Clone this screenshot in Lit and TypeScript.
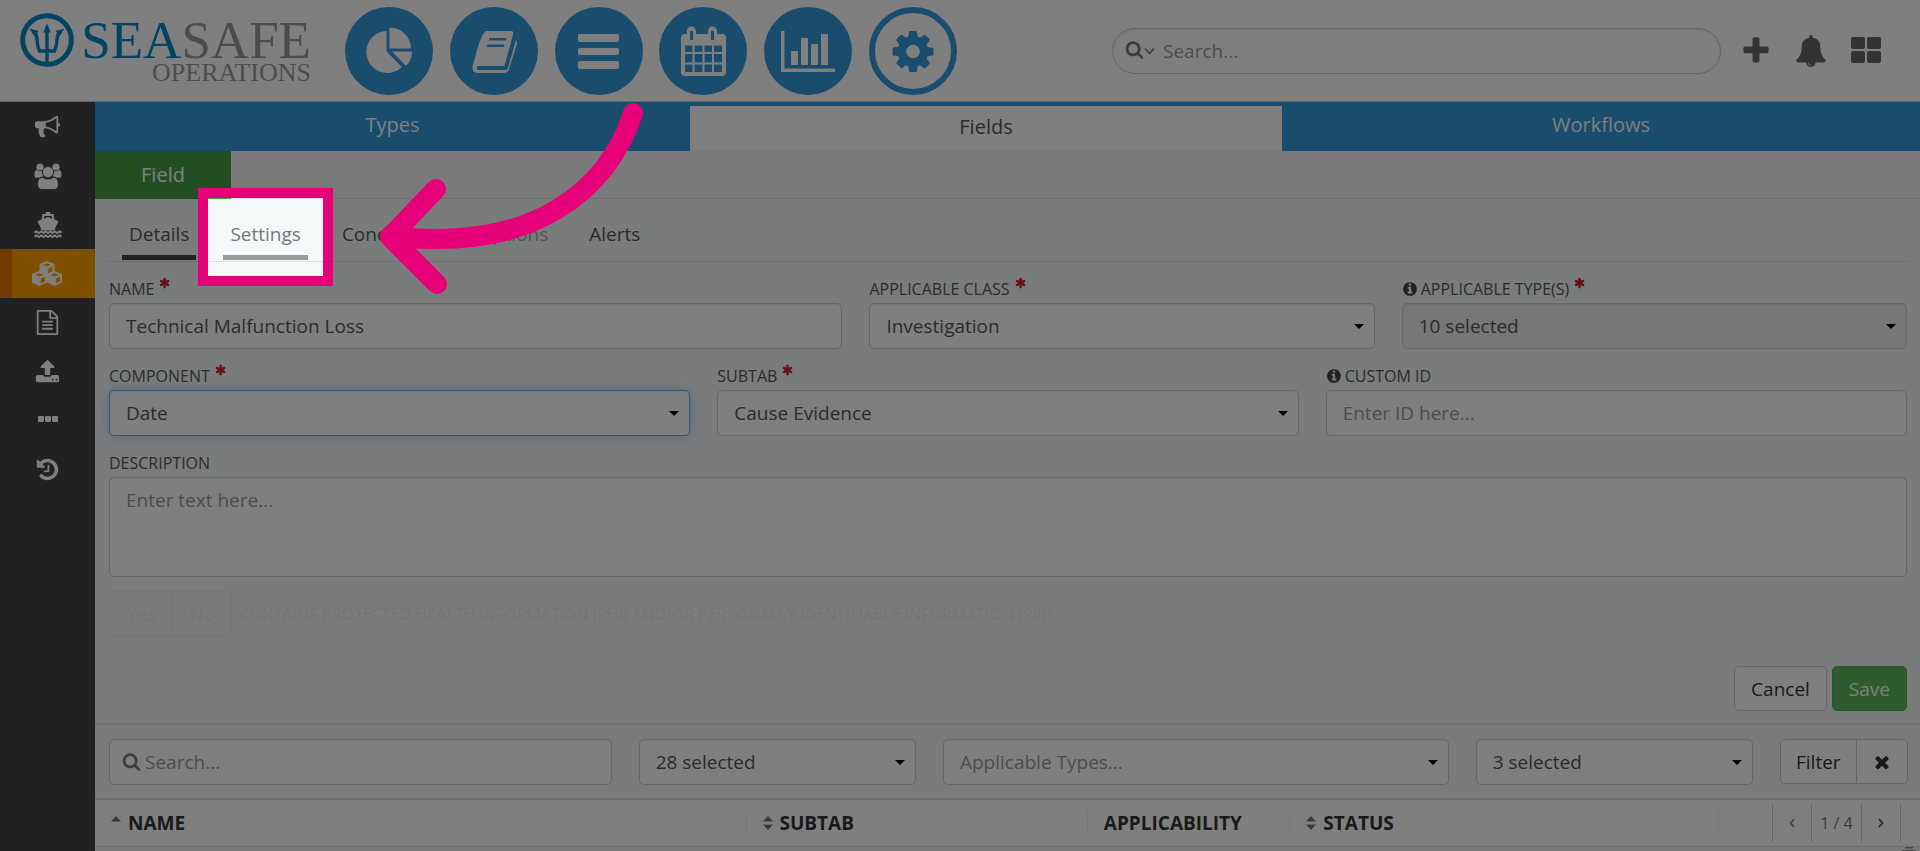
import { LitElement, html, css, svg } from "lit";
import { customElement } from "lit/decorators.js";
import { classMap } from "lit/directives/class-map.js";

const glyph = (d: string) => svg`<path d=${d}></path>`;

const SEARCH = glyph("M1216 832q0-185-131.5-316.5t-316.5-131.5-316.5 131.5-131.5 316.5 131.5 316.5 316.5 131.5 316.5-131.5 131.5-316.5zm512 832q0 52-38 90t-90 38q-54 0-90-38l-343-342q-179 124-399 124-143 0-273.5-55.5t-225-150-150-225-55.5-273.5 55.5-273.5 150-225 225-150 273.5-55.5 273.5 55.5 225 150 150 225 55.5 273.5q0 220-124 399l343 343q37 37 37 90z");
const PLUS = glyph("M1600 736v192q0 40-28 68t-68 28h-416v416q0 40-28 68t-68 28h-192q-40 0-68-28t-28-68v-416h-416q-40 0-68-28t-28-68v-192q0-40 28-68t68-28h416v-416q0-40 28-68t68-28h192q40 0 68 28t28 68v416h416q40 0 68 28t28 68z");
const BELL = glyph("M912 1696q0-16-16-16-59 0-101.5-42.5t-42.5-101.5q0-16-16-16t-16 16q0 73 51.5 124.5t124.5 51.5q16 0 16-16zm816-288q0 52-38 90t-90 38h-448q0 106-75 181t-181 75-181-75-75-181h-448q-52 0-90-38t-38-90q50-42 91-88t85-119.5 74.5-158.5 50-206 19.5-260q0-152 117-282.5t307-158.5q-8-19-8-39 0-40 28-68t68-28 68 28 28 68q0 20-8 39 190 28 307 158.5t117 282.5q0 139 19.5 260t50 206 74.5 158.5 85 119.5 91 88z");
const BULLHORN = glyph("M1664 640q53 0 90.5 37.5t37.5 90.5-37.5 90.5-90.5 37.5v384q0 52-38 90t-90 38q-417-347-812-380-58 19-91 66t-31 100.5 40 92.5q-20 33-23 65.5t6 58 33.5 55 48 50 61.5 50.5q-29 58-111.5 83t-168.5 11.5-132-55.5q-7-23-29.5-87.5t-32-94.5-23-89-15-101 3.5-98.5 22-110.5h-122q-66 0-113-47t-47-113v-192q0-66 47-113t113-47h480q435 0 896-384 52 0 90 38t38 90v384zm-128 604v-954q-394 302-768 343v270q377 42 768 341z");
const FILE = glyph("M1596 380q28 28 48 76t20 88v1152q0 40-28 68t-68 28h-1344q-40 0-68-28t-28-68v-1600q0-40 28-68t68-28h896q40 0 88 20t76 48zm-444-244v376h376q-10-29-22-41l-313-313q-12-12-41-22zm384 1528v-1024h-416q-40 0-68-28t-28-68v-416h-768v1536h1280zm-1024-864q0-14 9-23t23-9h704q14 0 23 9t9 23v64q0 14-9 23t-23 9h-704q-14 0-23-9t-9-23v-64zm736 224q14 0 23 9t9 23v64q0 14-9 23t-23 9h-704q-14 0-23-9t-9-23v-64q0-14 9-23t23-9h704zm0 256q14 0 23 9t9 23v64q0 14-9 23t-23 9h-704q-14 0-23-9t-9-23v-64q0-14 9-23t23-9h704z");
const UPLOAD = glyph("M1344 1472q0-26-19-45t-45-19-45 19-19 45 19 45 45 19 45-19 19-45zm256 0q0-26-19-45t-45-19-45 19-19 45 19 45 45 19 45-19 19-45zm128-224v320q0 40-28 68t-68 28h-1472q-40 0-68-28t-28-68v-320q0-40 28-68t68-28h427q21 56 70.5 92t110.5 36h256q61 0 110.5-36t70.5-92h427q40 0 68 28t28 68zm-325-648q-17 40-59 40h-256v448q0 26-19 45t-45 19h-256q-26 0-45-19t-19-45v-448h-256q-42 0-59-40-17-39 14-69l448-448q18-19 45-19t45 19l448 448q31 30 14 69z");
const HISTORY = glyph("M1664 896q0 156-61 298t-164 245-245 164-298 61q-172 0-327-72.5t-264-204.5q-7-10-6.5-22.5t8.5-20.5l137-138q10-9 25-9 16 2 23 12 73 95 179 147t225 52q104 0 198.5-40.5t163.5-109.5 109.5-163.5 40.5-198.5-40.5-198.5-109.5-163.5-163.5-109.5-198.5-40.5q-98 0-188 35.5t-160 101.5l137 138q31 30 14 69-17 40-59 40h-448q-26 0-45-19t-19-45v-448q0-42 40-59 39-17 69 14l130 129q107-101 244.5-156.5t284.5-55.5q156 0 298 61t245 164 164 245 61 298zm-640-288v448q0 14-9 23t-23 9h-320q-14 0-23-9t-9-23v-64q0-14 9-23t23-9h224v-352q0-14 9-23t23-9h64q14 0 23 9t9 23z");
const COG = glyph("M1152 896q0-106-75-181t-181-75-181 75-75 181 75 181 181 75 181-75 75-181zm512-109v222q0 12-8 23t-20 13l-185 28q-19 54-39 91 35 50 107 138 10 12 10 25t-9 23q-27 37-99 108t-94 71q-12 0-26-9l-138-108q-44 23-91 38-16 136-29 186-7 28-36 28h-222q-14 0-24.5-8.5t-11.5-21.5l-28-184q-49-16-90-37l-141 107q-10 9-25 9-14 0-25-11-126-114-165-168-7-10-7-23 0-12 8-23 15-21 51-66.5t54-70.5q-27-50-41-99l-183-27q-13-2-21-12.5t-8-23.5v-222q0-12 8-23t19-13l186-28q14-46 39-92-40-57-107-138-10-12-10-24 0-10 9-23 26-36 98.5-107.5t94.5-71.5q13 0 26 10l138 107q44-23 91-38 16-136 29-186 7-28 36-28h222q14 0 24.5 8.5t11.5 21.5l28 184q49 16 90 37l142-107q9-9 24-9 13 0 25 10 129 119 165 170 7 8 7 22 0 12-8 23-15 21-51 66.5t-54 70.5q26 50 41 98l183 28q13 2 21 12.5t8 23.5z");
const INFO = glyph("M1152 1376v-160q0-14-9-23t-23-9h-96v-512q0-14-9-23t-23-9h-320q-14 0-23 9t-9 23v160q0 14 9 23t23 9h96v320h-96q-14 0-23 9t-9 23v160q0 14 9 23t23 9h448q14 0 23-9t9-23zm-128-896v-160q0-14-9-23t-23-9h-192q-14 0-23 9t-9 23v160q0 14 9 23t23 9h192q14 0 23-9t9-23zm640 416q0 209-103 385.5t-279.5 279.5-385.5 103-385.5-103-279.5-279.5-103-385.5 103-385.5 279.5-279.5 385.5-103 385.5 103 279.5 279.5 103 385.5z");
const TIMES = glyph("M1490 1322q0 40-28 68l-136 136q-28 28-68 28t-68-28l-294-294-294 294q-28 28-68 28t-68-28l-136-136q-28-28-28-68t28-68l294-294-294-294q-28-28-28-68t28-68l136-136q28-28 68-28t68 28l294 294 294-294q28-28 68-28t68 28l136 136q28 28 28 68t-28 68l-294 294 294 294q28 28 28 68z");
const ASTERISK = glyph("M1482 1050q46 26 59.5 77.5t-12.5 97.5l-64 110q-26 46-77.5 59.5t-97.5-12.5l-266-153v307q0 52-38 90t-90 38h-128q-52 0-90-38t-38-90v-307l-266 153q-46 26-97.5 12.5t-77.5-59.5l-64-110q-26-46-12.5-97.5t59.5-77.5l266-154-266-154q-46-26-59.5-77.5t12.5-97.5l64-110q26-46 77.5-59.5t97.5 12.5l266 153v-307q0-52 38-90t90-38h128q52 0 90 38t38 90v307l266-153q46-26 97.5-12.5t77.5 59.5l64 110q26 46 12.5 97.5t-59.5 77.5l-266 154z");

const fa = (body: unknown, cls: string) =>
  html`<svg class=${cls} viewBox="0 0 1792 1792" aria-hidden="true">${body}</svg>`;

const USERS = svg`
  <circle cx="6" cy="4" r="3.600"></circle><circle cx="22" cy="4" r="3.600"></circle>
  <path d="M.5 12.500C.5 9.500 1 7 2.800 7c1.600 1.200 4 1.400 5.200.8-.3 2.600.4 4.400 1.600 5.600-1.600.1-3 .4-4 1.400H3C1.400 14.800.5 14 .5 12.500z"></path>
  <path d="M27.500 12.500c0-3-.5-5.500-2.300-5.500-1.600 1.200-4 1.400-5.200.8.3 2.600-.4 4.400-1.600 5.600 1.600.1 3 .4 4 1.400H25c1.600 0 2.500-.8 2.500-2.300z"></path>
  <circle cx="14" cy="9" r="5.200"></circle>
  <path d="M4 22c0-4 1-7.200 4.600-7.200 3 2.200 7.800 2.200 10.800 0C23 14.800 24 18 24 22c0 2.500-1.500 4-4 4H8c-2.500 0-4-1.500-4-4z"></path>`;
const SHIP = svg`
  <path d="M11.800 0h4.400v2h3.300l1 5.500 4 1.800-2.300 4.600c-.9 1.700-1.200 2.800-1.200 4.600H7c0-1.800-.3-2.900-1.200-4.600L3.500 9.300l4-1.800 1-5.500h3.300zM10.300 4l-.5 2.700L14 5l4.200 1.700-.5-2.700z"></path>
  <path d="M.5 20.500l2.200-1 2.300 1.500 2.200-1.500 2.300 1.500 2.200-1.500L14 21l2.300-1.500 2.200 1.500 2.300-1.500L23 21l2.300-1.500 2.200 1M.5 24.500l2.200-1L5 25l2.200-1.500L9.500 25l2.200-1.500L14 25l2.300-1.500 2.200 1.500 2.300-1.500L23 25l2.300-1.500 2.200 1" fill="none" stroke="currentColor" stroke-width="2"></path>`;
const cube = (x: number, y: number) => svg`
  <path fill-rule="evenodd" transform="translate(${x} ${y})" d="M7.500 0L15 3v8.500L7.500 15 0 11.500V3zM7.500 2.200L3.400 3.800 7.500 5.500l4.100-1.700zM8.800 7.500v5L13 10.500V5.700z"></path>`;
const CUBES = svg`${cube(7.5, 0)}${cube(0, 10)}${cube(15, 10)}`;
const DOTS = svg`<rect x="0" width="6" height="6" rx="1.200"></rect><rect x="7" width="6" height="6" rx="1.200"></rect><rect x="14" width="6" height="6" rx="1.200"></rect>`;

const SIDE: { label: string; icon: unknown; active?: boolean }[] = [
  { label: "Announcements", icon: fa(BULLHORN, "s-fa") },
  { label: "People", icon: html`<svg width="28" height="26" viewBox="0 0 28 26">${USERS}</svg>` },
  { label: "Vessels", icon: html`<svg width="28" height="26" viewBox="0 0 28 26">${SHIP}</svg>` },
  { label: "Components", icon: html`<svg width="30" height="25" viewBox="0 0 30 25">${CUBES}</svg>`, active: true },
  { label: "Documents", icon: fa(FILE, "s-fa") },
  { label: "Upload", icon: fa(UPLOAD, "s-fa") },
  { label: "More", icon: html`<svg width="20" height="10" viewBox="0 0 20 10">${DOTS}</svg>` },
  { label: "History", icon: fa(HISTORY, "s-fa") },
];

const NAV: { label: string; icon: unknown; ring?: boolean }[] = [
  {
    label: "Dashboard",
    icon: svg`<path d="M41.500 24v20.500L57 60A21 21 0 1 1 41.500 24z"></path>
      <path d="M44.500 20.500A21.500 21 0 0 1 66 41.500H44.500z"></path>
      <path d="M47 44.500H67a20 20 0 0 1-6 14.500z"></path>`,
  },
  {
    label: "Library",
    icon: svg`<path fill-rule="evenodd" d="M37 24h24q3 0 2 3.500L54.500 59H27.500q-1.500 2 0 4H55q2.500 0 3.200-3L66 33q1.500 1 1 3.500L59 62q-1.500 4-5 4H28q-5.500 0-5.500-6Q30 30 34 26q1-2 3-2zM39.500 31l-.8 2.500h17l.8-2.500zM37.500 37.500l-.8 2.500h17l.8-2.500z"></path>`,
  },
  {
    label: "Lists",
    icon: svg`<rect x="23" y="27" width="41" height="8" rx="2"></rect><rect x="23" y="41" width="41" height="7" rx="2"></rect><rect x="23" y="54" width="41" height="8" rx="2"></rect>`,
  },
  {
    label: "Calendar",
    icon: svg`<path fill-rule="evenodd" d="M26 27h2v-3a4.500 4.500 0 0 1 9 0v3h12v-3a4.500 4.500 0 0 1 9 0v3h5q4 0 4 4v34q0 4-4 4H26q-4 0-4-4V31q0-4 4-4zM31 24v9h3v-9zM52 24v9h3v-9z
      M26 38.500h7.500V45H26zM35.500 38.500h8V45h-8zM45.500 38.500h7.500V45h-7.500zM55 38.500h8V45h-8z
      M26 47h7.500v8.500H26zM35.500 47h8v8.500h-8zM45.500 47h7.500v8.500h-7.500zM55 47h8v8.500h-8z
      M26 57.500h7.500V65H26zM35.500 57.500h8V65h-8zM45.500 57.500h7.500V65h-7.500zM55 57.500h8V65h-8z"></path>`,
  },
  {
    label: "Reports",
    icon: svg`<path d="M17 24h3.500v37.500H71V65H17z"></path><rect x="27" y="44" width="7" height="14"></rect><rect x="37" y="31" width="7" height="27"></rect><rect x="47" y="37" width="7" height="21"></rect><rect x="57" y="27" width="7" height="31"></rect>`,
  },
  { label: "Administration", icon: svg`<g transform="translate(20.200 20.700) scale(.0266)">${COG}</g>`, ring: true },
];

@customElement("app-root")
export class AppRoot extends LitElement {
  static styles = css`
    :host {
      display: block;
      position: relative;
      box-sizing: border-box;
      height: 100vh;
      overflow: hidden;
      background: #fff;
      color: #555;
      font: 19px/26px "Open Sans", "Noto Sans", sans-serif;
    }
    *, *::before, *::after { box-sizing: border-box; }
    svg { display: block; fill: currentColor; flex: none; }
    button, input, select, textarea { font: inherit; color: inherit; margin: 0; }
    button { cursor: pointer; }
    a { color: inherit; text-decoration: none; }

    .header {
      display: flex;
      align-items: center;
      height: 102px;
      padding: 0 38px 0 20px;
      border-bottom: 1px solid #ccc;
    }
    .logo { display: flex; gap: 7px; width: 325px; height: 76px; color: #999; }
    .logo-mark { color: #0088c5; }
    .logo-words { display: flex; flex-direction: column; align-items: flex-end; width: 230px; font-family: "Liberation Serif", serif; }
    .logo-main { font-size: 53px; line-height: 54px; }
    .logo-main b { color: #0088c5; font-weight: 400; }
    .logo-sub { font-size: 26px; line-height: 12px; }
    .nav { display: flex; justify-content: space-between; width: 612px; }
    .nav-btn {
      width: 88px; height: 88px; padding: 0; border: 0; border-radius: 50%;
      background: #3498db; color: #fff;
    }
    .nav-btn.ring { background: #fff; color: #3498db; border: 6px solid #3498db; }
    .nav-btn.ring svg { margin: -6px; }
    .global-search {
      display: flex; align-items: center; flex: 1;
      height: 46px; margin: 8px 18px 8px 155px; padding: 0 12px;
      border: 1px solid #ccc; border-radius: 23px;
      box-shadow: inset 0 1px 2px rgba(0, 0, 0, .1);
      color: #777;
    }
    .global-search input { flex: 1; min-width: 0; border: 0; background: none; padding: 0; margin-left: 8px; outline: 0; }
    ::placeholder { color: #999; opacity: 1; }
    .icon-search { width: 19px; height: 19px; margin-bottom: 2px; }
    .tools { display: flex; align-items: center; gap: 22px; color: #666; }
    .tools button { display: flex; justify-content: center; width: 33px; padding: 0; border: 0; background: none; }
    .t-fa { width: 32px; height: 32px; }

    .body { display: flex; height: calc(100vh - 102px); }
    .side { width: 95px; flex: none; background: #424242; color: #fff; }
    .side a { display: flex; align-items: center; justify-content: center; height: 49px; }
    .side a.active { background: #ffa000; border-left: 12px solid #e67400; padding-right: 14px; }
    .s-fa { width: 25px; height: 25px; }
    .main { flex: 1; min-width: 0; background: #f5f5f5; }

    .top-tabs { display: grid; grid-template-columns: 595fr 592fr 638fr; height: 49px; background: #3498db; color: #fff; font-size: 20px; }
    .top-tabs a { display: flex; align-items: center; justify-content: center; padding-bottom: 4px; }
    .top-tabs a.active { background: #fff; color: #555; margin-top: 4px; padding-bottom: 4px; }
    .record-tabs { display: flex; height: 48px; border-bottom: 1px solid #ddd; }
    .record-tabs a { display: flex; align-items: center; justify-content: center; width: 136px; height: 48px; background: #449d44; color: #fff; font-size: 20px; }

    .panel { background: #f4f8f9; border-bottom: 2px solid #ddd; padding: 0 13px 12px 14px; }
    .sub-tabs { display: flex; gap: 27px; height: 63px; padding: 22px 13px 0; border-bottom: 1px solid #dce0e1; }
    .sub-tab { position: relative; height: 39px; padding: 0 7px; border-bottom: 5px solid transparent; color: #555; }
    .sub-tab.current { border-color: #444; }
    .sub-tab.hover { border-color: #999b9b; color: #777; }
    .sub-tab.off { color: #aaa; }

    .row { display: grid; gap: 27px; margin-bottom: 15px; }
    .row.first { grid-template-columns: 733fr 505fr 505fr; margin-top: 15px; }
    .row.thirds { grid-template-columns: 1fr 1fr 1fr; }
    .row.full { margin-bottom: 14px; }
    .label { display: flex; align-items: center; height: 24px; margin-bottom: 2px; font-size: 16px; line-height: 24px; }
    .icon-info { width: 16px; height: 16px; margin-right: 3px; color: #444; }
    .icon-req { width: 12px; height: 12px; margin-left: 5px; color: #c62828; align-self: flex-start; }
    .control {
      display: block; width: 100%; height: 46px; padding: 0 16px;
      border: 1px solid #ccc; border-radius: 5px; background: #fff; color: #555; outline: 0;
      box-shadow: inset 0 1px 2px rgba(0, 0, 0, .08);
      appearance: none;
    }
    textarea.control { height: 100px; padding: 9px 16px; resize: none; }
    .control.focused { border-color: #66afe9; box-shadow: inset 0 1px 2px rgba(0, 0, 0, .08), 0 0 9px rgba(102, 175, 233, .6); }
    .control:disabled { background: #eee; opacity: 1; }
    .control.empty { color: #999; }
    .select { position: relative; }
    .select::after {
      content: ""; position: absolute; right: 11px; top: 50%; margin-top: -2px;
      border: 5px solid transparent; border-top-color: #000; border-bottom: 0; pointer-events: none;
    }
    .phi { display: flex; align-items: center; gap: 7px; height: 60px; border-bottom: 1px solid #e8ecec; padding-bottom: 13px; color: #e9eded; font-size: 16px; }
    .group { display: flex; }
    .group .btn { border-radius: 5px 0 0 5px; }
    .group .btn + .btn { border-radius: 0 5px 5px 0; margin-left: -1px; }
    .btn { display: flex; align-items: center; justify-content: center; height: 45px; padding: 0 16px; border: 1px solid #ccc; border-radius: 5px; background: #fff; color: #333; font-size: 19px; }
    .phi .btn { height: 46px; background: transparent; border-color: #eaeeee; color: #e9eded; }
    .btn.save { background: #5cb85c; border-color: #4cae4c; color: #fff; }
    .actions { display: flex; justify-content: flex-end; gap: 5px; padding-top: 15px; }

    .filters { display: grid; grid-template-columns: 502fr 277fr 505fr 277fr 127px; gap: 27px; padding: 14px 13px 14px 14px; border-bottom: 2px solid #ddd; height: 75px; }
    .filters .btn { padding: 0 15px; }
    .search-box { display: flex; align-items: center; gap: 4px; padding: 0 12px; color: #777; }
    .search-box input { flex: 1; min-width: 0; border: 0; padding: 0; background: none; outline: 0; }
    .icon-x { width: 20px; height: 20px; }

    table { width: 100%; border-collapse: collapse; table-layout: fixed; background: #fff; color: #333; }
    th { height: 46px; padding: 0; border-bottom: 1px solid #ddd; text-align: left; font-weight: 700; }
    .c1 { width: 35.7%; } .c2 { width: 18.7%; } .c3 { width: 11.1%; } .c4 { width: 23.5%; }
    .cell { display: flex; align-items: center; gap: 7px; height: 24px; padding: 0 16px; border-right: 1px solid #eee; line-height: 24px; }
    .cell.pager-cell { border: 0; justify-content: flex-end; height: 38px; padding: 0 19px 0 0; }
    .sort { width: 10px; height: 16px; color: #777; }
    .pager { display: flex; height: 38px; border-right: 1px solid #ccc; font-weight: 400; font-size: 16px; color: #777; }
    .pager > * { display: flex; align-items: center; justify-content: center; width: 39px; border: 0; border-left: 1px solid #ccc; background: none; padding: 0; }
    .pager > span { width: 50px; }
    .pager .next { color: #2a6496; }
    .list-edge { display: flex; justify-content: flex-end; padding-right: 4px; color: #888; }

    .spotlight {
      position: absolute; z-index: 5; left: -25px; right: -25px; top: -33px; height: 98px;
      border: 10px solid #e6007a; box-shadow: 0 0 0 3000px rgba(0, 0, 0, .5); pointer-events: none;
    }
    .arrow { position: absolute; z-index: 6; left: 153px; top: -121px; pointer-events: none; }
  `;

  private label(id: string, text: string, required = false, info = false) {
    return html`<label class="label" for=${id}>
      ${info ? fa(INFO, "icon-info") : null}<span>${text}</span>${required ? fa(ASTERISK, "icon-req") : null}
    </label>`;
  }

  private select(id: string, value: string, opts: { focused?: boolean; empty?: boolean; disabled?: boolean; label?: string } = {}) {
    return html`<div class="select">
      <select id=${id} aria-label=${opts.label ?? value} ?disabled=${opts.disabled}
        class=${classMap({ control: true, focused: !!opts.focused, empty: !!opts.empty })}>
        <option>${value}</option>
      </select>
    </div>`;
  }

  private sort(both: boolean) {
    return html`<svg class="sort" viewBox="0 0 10 16" aria-hidden="true">
      <path d="M0 6.500L5 1l5 5.500z"></path>${both ? svg`<path d="M0 9.500h10L5 15z"></path>` : null}
    </svg>`;
  }

  render() {
    return html`
      <header class="header">
        <div class="logo">
          <svg class="logo-mark" width="54" height="54" viewBox="0 0 54 54" aria-hidden="true">
            <circle cx="27" cy="27" r="24.300" fill="none" stroke="currentColor" stroke-width="5"></circle>
            <path d="M27 16v34M14 18q3 4 3 9 .3 6 2.500 11h15q2.200-5 2.500-11 0-5 3-9" fill="none" stroke="currentColor" stroke-width="3.400"></path>
            <path d="M27 10.500l3.800 9h-7.600zM9.500 15.500l9 2.500-4 5.500zM44.500 15.500l-9 2.500 4 5.500z"></path>
          </svg>
          <div class="logo-words">
            <span class="logo-main"><b>SEA</b>SAFE</span>
            <span class="logo-sub">OPERATIONS</span>
          </div>
        </div>
        <nav class="nav">
          ${NAV.map((n) => html`<button class=${classMap({ "nav-btn": true, ring: !!n.ring })} aria-label=${n.label}>
            <svg width="88" height="88" viewBox="0 0 88 88" aria-hidden="true">${n.icon}</svg>
          </button>`)}
        </nav>
        <div class="global-search">
          ${fa(SEARCH, "icon-search")}
          <svg width="11" height="8" viewBox="0 0 11 8" aria-hidden="true"><path d="M1 1.500l4.500 5 4.500-5" fill="none" stroke="currentColor" stroke-width="1.800"></path></svg>
          <input type="search" placeholder="Search..." aria-label="Search" />
        </div>
        <div class="tools">
          <button aria-label="Add">${fa(PLUS, "t-fa")}</button>
          <button aria-label="Notifications">${fa(BELL, "t-fa")}</button>
          <button aria-label="Apps"><svg width="30" height="28" viewBox="0 0 30 28" aria-hidden="true">
            <rect width="14" height="12" rx="2"></rect><rect x="16" width="14" height="12" rx="2"></rect>
            <rect y="14" width="14" height="12" rx="2"></rect><rect x="16" y="14" width="14" height="12" rx="2"></rect>
          </svg></button>
        </div>
      </header>

      <div class="body">
        <nav class="side">
          ${SIDE.map((s) => html`<a href="#" aria-label=${s.label} class=${classMap({ active: !!s.active })}>${s.icon}</a>`)}
        </nav>
        <main class="main">
          <nav class="top-tabs">
            <a href="#">Types</a><a href="#" class="active">Fields</a><a href="#">Workflows</a>
          </nav>
          <nav class="record-tabs"><a href="#">Field</a></nav>

          <form class="panel" @submit=${(e: Event) => e.preventDefault()}>
            <nav class="sub-tabs">
              <a href="#" class="sub-tab current">Details</a>
              <a href="#" class="sub-tab hover">Settings
                <span class="spotlight"></span>
                <svg class="arrow" width="270" height="196" viewBox="376 100 270 196" aria-hidden="true">
                  <path d="M633 113C609 187 537 254 390 236M436 189L390 237L437 284" fill="none" stroke="#e6007a" stroke-width="20" stroke-linecap="round" stroke-linejoin="round"></path>
                </svg>
              </a>
              <a href="#" class="sub-tab">Conditions</a>
              <a href="#" class="sub-tab off">Options</a>
              <a href="#" class="sub-tab">Alerts</a>
            </nav>

            <div class="row first">
              <div>${this.label("name", "NAME", true)}<input id="name" class="control" .value=${"Technical Malfunction Loss"} /></div>
              <div>${this.label("class", "APPLICABLE CLASS", true)}${this.select("class", "Investigation")}</div>
              <div>${this.label("types", "APPLICABLE TYPE(S)", true, true)}${this.select("types", "10 selected", { disabled: true })}</div>
            </div>
            <div class="row thirds">
              <div>${this.label("component", "COMPONENT", true)}${this.select("component", "Date", { focused: true })}</div>
              <div>${this.label("subtab", "SUBTAB", true)}${this.select("subtab", "Cause Evidence")}</div>
              <div>${this.label("custom", "CUSTOM ID", false, true)}<input id="custom" class="control" placeholder="Enter ID here..." /></div>
            </div>
            <div class="row full">
              <div>${this.label("description", "DESCRIPTION")}<textarea id="description" class="control" placeholder="Enter text here..."></textarea></div>
            </div>
            <div class="phi">
              <div class="group">
                <button type="button" class="btn" disabled>Yes</button><button type="button" class="btn" disabled>No</button>
              </div>
              <span>CONTAINS PROTECTED HEALTH INFORMATION (PHI) AND/OR PERSONALLY IDENTIFIABLE INFORMATION (PII)?</span>
            </div>
            <div class="actions">
              <button type="button" class="btn">Cancel</button>
              <button type="submit" class="btn save">Save</button>
            </div>
          </form>

          <div class="filters">
            <div class="control search-box">${fa(SEARCH, "icon-search")}<input type="search" placeholder="Search..." aria-label="Search fields" /></div>
            ${this.select("f-subtab", "28 selected", { label: "Subtabs" })}
            ${this.select("f-types", "Applicable Types...", { empty: true, label: "Applicable types" })}
            ${this.select("f-status", "3 selected", { label: "Status" })}
            <div class="group">
              <button class="btn">Filter</button><button class="btn" aria-label="Clear filter">${fa(TIMES, "icon-x")}</button>
            </div>
          </div>

          <table>
            <thead>
              <tr>
                <th class="c1"><div class="cell">${this.sort(false)}NAME</div></th>
                <th class="c2"><div class="cell">${this.sort(true)}SUBTAB</div></th>
                <th class="c3"><div class="cell">APPLICABILITY</div></th>
                <th class="c4"><div class="cell">${this.sort(true)}STATUS</div></th>
                <th>
                  <div class="cell pager-cell"><div class="pager">
                    <button aria-label="Previous page"><svg width="6" height="10" viewBox="0 0 6 10"><path d="M5 1L1.500 5 5 9" fill="none" stroke="currentColor" stroke-width="1.600"></path></svg></button>
                    <span>1 / 4</span>
                    <button class="next" aria-label="Next page"><svg width="6" height="10" viewBox="0 0 6 10"><path d="M1 1l3.500 4L1 9" fill="none" stroke="currentColor" stroke-width="1.800"></path></svg></button>
                  </div></div>
                </th>
              </tr>
            </thead>
          </table>
          <div class="list-edge"><svg width="14" height="5" viewBox="0 0 14 5" aria-hidden="true"><path d="M3 0h8v1.500H3zM0 3h14v2H0z"></path></svg></div>
        </main>
      </div>
    `;
  }
}
